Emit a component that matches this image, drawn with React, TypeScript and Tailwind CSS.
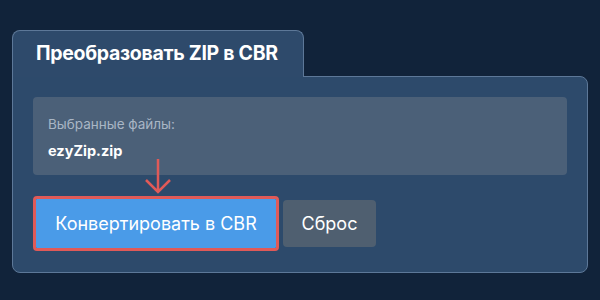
import React from "react"

export default function App() {
  return (
    <div className="w-[600px] h-[300px] bg-[#11233a] pt-[30px] px-[12px] font-['Inter','Noto_Sans',sans-serif]">
      <div className="w-[576px]">
        <div className="relative z-10 w-[292px] h-[47px] -mb-px bg-[#2e4a6b] border border-b-0 border-[#5d7898] rounded-t-[8px] pl-[23px] flex items-center">
          <h1 className="text-[19.5px] font-bold text-white tracking-[-0.3px]">Преобразовать ZIP в CBR</h1>
        </div>
        <div className="relative h-[197px] bg-[#2d4a6b] border border-[#5d7898] rounded-b-[8px] rounded-tr-[8px] p-[20px] pb-[20px]">
          <div className="h-[78px] bg-[#4b6078] rounded-[4px] pl-[15px] pt-[18px]">
            <div className="text-[13.5px] text-[#a9b6c5] leading-[18px]">Выбранные файлы:</div>
            <div className="mt-[9px] text-[14.5px] font-bold text-white leading-[18px]">ezyZip.zip</div>
          </div>
          <div className="mt-[21px] flex items-center gap-[4px]">
            <div className="border-[3px] border-[#e05a58] rounded-[4px]">
              <button className="h-[49px] w-[240px] bg-[#4a9be8] text-white text-[18px] rounded-[1px]">
                Конвертировать в CBR
              </button>
            </div>
            <button className="h-[47px] w-[93px] bg-[#4f5f70] text-white text-[18px] rounded-[4px]">
              Сброс
            </button>
          </div>
          <svg className="absolute left-[130px] top-[82px]" width="30" height="36" viewBox="0 0 30 36" fill="none">
            <path d="M15 0 V33 M3 21 L15 33 L27 21" stroke="#e05a58" strokeWidth="2.5" />
          </svg>
        </div>
      </div>
    </div>
  )
}
